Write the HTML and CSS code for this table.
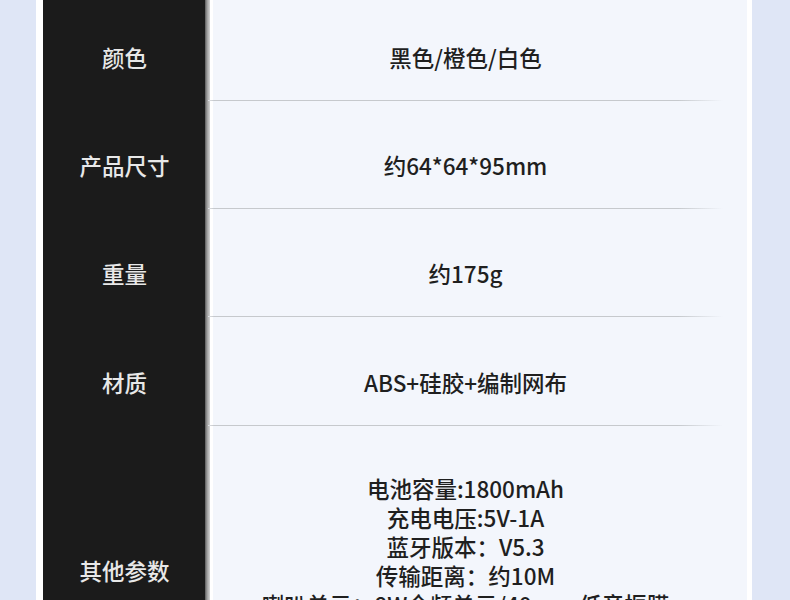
FILE: index.html
```html
<!DOCTYPE html>
<html lang="zh">
<head>
<meta charset="utf-8">
<link rel="stylesheet" href="styles.css">
</head>
<body>
<div class="card">
  <div class="table">
    <div class="row">
      <div class="label">颜色</div>
      <div class="value"><span>黑色/橙色/白色</span></div>
    </div>
    <div class="row">
      <div class="label">产品尺寸</div>
      <div class="value"><span>约64*64*95mm</span></div>
    </div>
    <div class="row">
      <div class="label">重量</div>
      <div class="value"><span>约175g</span></div>
    </div>
    <div class="row row-tall">
      <div class="label">材质</div>
      <div class="value"><span>ABS+硅胶+编制网布</span></div>
    </div>
    <div class="row row-last">
      <div class="label">其他参数</div>
      <div class="value multi">
        <span>电池容量:1800mAh</span>
        <span>充电电压:5V-1A</span>
        <span>蓝牙版本：V5.3</span>
        <span>传输距离：约10M</span>
        <span>喇叭单元：8W全频单元/40mm 低音振膜</span>
      </div>
    </div>
  </div>
</div>
</body>
</html>
```
FILE: styles.css
```css
html, body {
  margin: 0;
  padding: 0;
}
body {
  width: 790px;
  height: 600px;
  overflow: hidden;
  background: #dfe6f6;
  font-family: "Noto Sans CJK SC", "Noto Sans", sans-serif;
}
.card {
  margin-left: 36px;
  width: 716px;
  padding: 0 5px 0 7px;
  box-sizing: border-box;
  background: #ffffff;
  min-height: 700px;
}
.table {
  margin-top: -7px;
}
.row {
  display: grid;
  grid-template-columns: 167px 1fr;
  height: 108px;
}
.row-tall {
  height: 109px;
}
.label {
  background: linear-gradient(to right, #1b1b1b 0, #1b1b1b 162px, #5a5a5a 162px, #9a9a9a 164px, #d4d4d4 167px);
  color: #e8e8e8;
  font-size: 22.5px;
  font-weight: 500;
  display: flex;
  align-items: center;
  justify-content: center;
  padding: 20px 4px 0 0;
  box-sizing: border-box;
}
.value {
  position: relative;
  background: linear-gradient(to right, #ffffff 0, #ffffff 3px, #f3f6fc 3px);
  color: #1f1f1f;
  font-size: 22.5px;
  font-weight: 500;
  display: flex;
  flex-direction: column;
  align-items: center;
  justify-content: center;
  padding: 20px 26px 0 0;
  box-sizing: border-box;
}
.value::after {
  content: "";
  position: absolute;
  left: -2px;
  right: 24px;
  bottom: 0;
  height: 1px;
  background: linear-gradient(to right, #e0e2e6 0, #c6c9cd 6px, #c6c9cd 470px, rgba(198,201,205,0) 100%);
}
.row-last {
  height: auto;
}
.row-last .value {
  justify-content: flex-start;
  padding: 48px 26px 74px 0;
  line-height: 29px;
  white-space: nowrap;
}
.row-last .value::after {
  display: none;
}
```
